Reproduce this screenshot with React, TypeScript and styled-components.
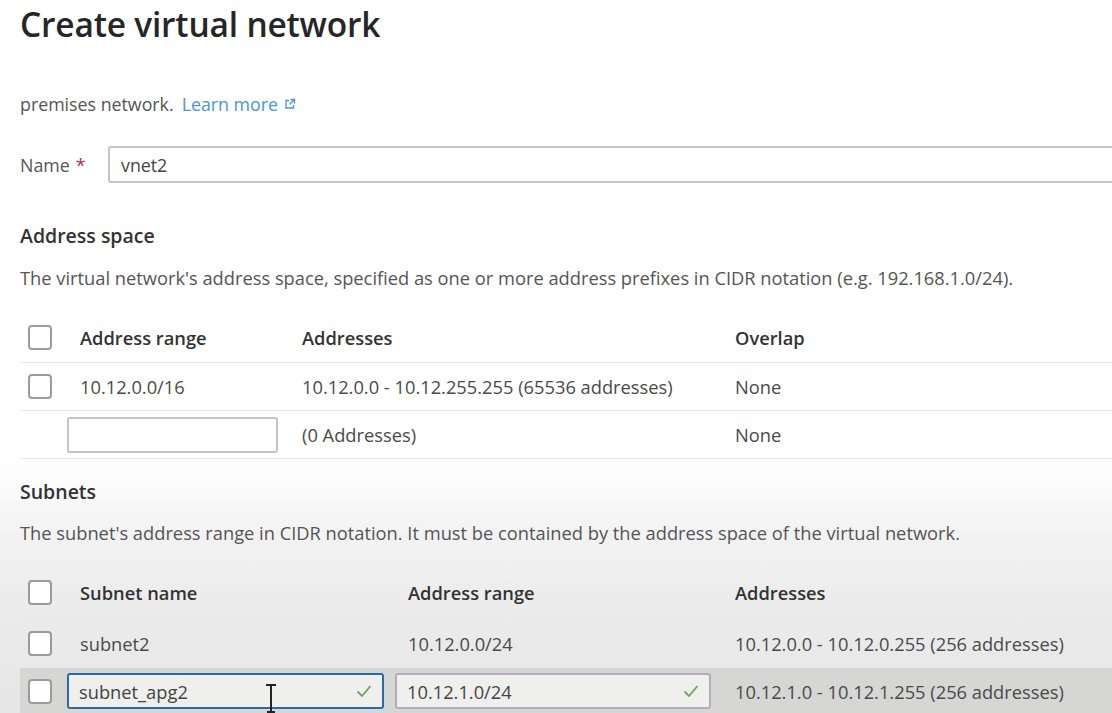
import React from "react";
import styled, { createGlobalStyle } from "styled-components";

const GlobalStyle = createGlobalStyle`
  html, body {
    margin: 0;
    padding: 0;
  }
  body {
    width: 1112px;
    height: 713px;
    overflow: hidden;
    font-family: "Open Sans", "Noto Sans", Arial, sans-serif;
    color: #464646;
    background: linear-gradient(to bottom, #ffffff 0px, #ffffff 460px, #f3f3f3 530px, #ececec 600px, #e6e6e6 713px);
  }
`;

const Page = styled.div`
  position: relative;
  height: 713px;
  padding-left: 20px;
  box-sizing: border-box;
  overflow: hidden;
`;

const Title = styled.h1`
  margin: 0;
  font-size: 33.5px;
  line-height: 48px;
  font-weight: 600;
  color: #262626;
  letter-spacing: -0.2px;
`;

const Intro = styled.p`
  margin: 44px 0 0;
  font-size: 17.8px;
  line-height: 24px;
  color: #555;
  display: flex;
  align-items: center;
  gap: 8px;
`;

const Link = styled.a`
  color: #4b96d2;
  text-decoration: none;
  display: inline-flex;
  align-items: center;
  gap: 6px;
`;

const NameRow = styled.div`
  margin-top: 30px;
  display: flex;
  align-items: center;
`;

const Label = styled.label`
  width: 88px;
  font-size: 17.8px;
  color: #555;
  display: flex;
  gap: 6px;
`;

const Required = styled.span`
  color: #b0334a;
`;

const NameInput = styled.div`
  flex: 1;
  height: 37px;
  margin-right: -20px;
  box-sizing: border-box;
  border: 2px solid #c9c1c9;
  border-right: none;
  border-radius: 3px 0 0 3px;
  display: flex;
  align-items: center;
  padding-left: 11px;
  font-size: 17.8px;
  color: #444;
`;

const SectionHeading = styled.h2<{ $top: number }>`
  margin: ${(p) => p.$top}px 0 0;
  font-size: 19.5px;
  line-height: 26px;
  font-weight: 600;
  color: #333;
`;

const Description = styled.p<{ $top: number }>`
  margin: ${(p) => p.$top}px 0 0;
  font-size: 18.3px;
  line-height: 24px;
  color: #555;
  white-space: nowrap;
`;

const Table = styled.div<{ $top: number }>`
  margin-top: ${(p) => p.$top}px;
  display: flex;
  flex-direction: column;
`;

const Row = styled.div<{ $cols: string; $h: number; $highlight?: boolean; $line?: boolean }>`
  display: grid;
  grid-template-columns: ${(p) => p.$cols};
  align-items: center;
  height: ${(p) => p.$h}px;
  box-sizing: border-box;
  border-bottom: ${(p) => (p.$line ? "1px solid #e8e8e8" : "none")};
  background: ${(p) => (p.$highlight ? "#d6d6d4" : "transparent")};
  font-size: 18.3px;
  color: #4a4a4a;
`;

const HeadCell = styled.div`
  font-weight: 600;
  color: #333;
  white-space: nowrap;
`;

const Cell = styled.div`
  white-space: nowrap;
`;

const CheckCell = styled.div`
  padding-left: 8px;
  display: flex;
  align-items: center;
`;

const Checkbox = styled.span`
  width: 24px;
  height: 25px;
  box-sizing: border-box;
  border: 2px solid #9b9b9b;
  border-radius: 4px;
  background: #fff;
  display: block;
`;

const CellInput = styled.div<{ $tone?: "focus" | "valid" | "plain" }>`
  margin-left: -13px;
  margin-right: 24px;
  height: 36px;
  box-sizing: border-box;
  border-radius: 3px;
  border: 2px solid
    ${(p) => (p.$tone === "focus" ? "#2f6aa8" : p.$tone === "valid" ? "#b6a9bd" : "#c4c4c4")};
  background: ${(p) => (p.$tone === "plain" ? "#fff" : "#efefee")};
  display: flex;
  align-items: center;
  justify-content: space-between;
  padding: 0 10px 0 10px;
  color: #444;
`;

const Cursor = styled.svg`
  position: absolute;
  left: 265px;
  top: 684px;
`;

const Check = () => (
  <svg width="16" height="14" viewBox="0 0 16 14">
    <path d="M1.5 7.5 L6 12 L14.5 2" fill="none" stroke="#6fa35c" strokeWidth="1.8" />
  </svg>
);

const ExternalIcon = () => (
  <svg width="12" height="12" viewBox="0 0 12 12">
    <path d="M5 2.5 H2 V10 H9.5 V7" fill="none" stroke="#4b96d2" strokeWidth="1.3" />
    <path d="M6.5 1.5 H10.5 V5.5 M10.5 1.5 L5.5 6.5" fill="none" stroke="#4b96d2" strokeWidth="1.3" />
  </svg>
);

const addrCols = "60px 222px 433px 1fr";
const subCols = "60px 328px 327px 1fr";

export default function App() {
  return (
    <>
      <GlobalStyle />
      <Page>
        <Title>Create virtual network</Title>
        <Intro>
          premises network.
          <Link>
            Learn more <ExternalIcon />
          </Link>
        </Intro>
        <NameRow>
          <Label>
            Name <Required>*</Required>
          </Label>
          <NameInput>vnet2</NameInput>
        </NameRow>

        <SectionHeading $top={40}>Address space</SectionHeading>
        <Description $top={17}>
          The virtual network's address space, specified as one or more address prefixes in CIDR notation (e.g. 192.168.1.0/24).
        </Description>
        <Table $top={22}>
          <Row $cols={addrCols} $h={51} $line>
            <CheckCell>
              <Checkbox />
            </CheckCell>
            <HeadCell>Address range</HeadCell>
            <HeadCell>Addresses</HeadCell>
            <HeadCell>Overlap</HeadCell>
          </Row>
          <Row $cols={addrCols} $h={48} $line>
            <CheckCell>
              <Checkbox />
            </CheckCell>
            <Cell>10.12.0.0/16</Cell>
            <Cell>10.12.0.0 - 10.12.255.255 (65536 addresses)</Cell>
            <Cell>None</Cell>
          </Row>
          <Row $cols={addrCols} $h={48} $line>
            <CheckCell />
            <CellInput $tone="plain" />
            <Cell>(0 Addresses)</Cell>
            <Cell>None</Cell>
          </Row>
        </Table>

        <SectionHeading $top={20}>Subnets</SectionHeading>
        <Description $top={16}>
          The subnet's address range in CIDR notation. It must be contained by the address space of the virtual network.
        </Description>
        <Table $top={23}>
          <Row $cols={subCols} $h={50} $line>
            <CheckCell>
              <Checkbox />
            </CheckCell>
            <HeadCell>Subnet name</HeadCell>
            <HeadCell>Address range</HeadCell>
            <HeadCell>Addresses</HeadCell>
          </Row>
          <Row $cols={subCols} $h={50}>
            <CheckCell>
              <Checkbox />
            </CheckCell>
            <Cell>subnet2</Cell>
            <Cell>10.12.0.0/24</Cell>
            <Cell>10.12.0.0 - 10.12.0.255 (256 addresses)</Cell>
          </Row>
          <Row $cols={subCols} $h={46} $highlight>
            <CheckCell>
              <Checkbox />
            </CheckCell>
            <CellInput $tone="focus">
              subnet_apg2
              <Check />
            </CellInput>
            <CellInput $tone="valid">
              10.12.1.0/24
              <Check />
            </CellInput>
            <Cell>10.12.1.0 - 10.12.1.255 (256 addresses)</Cell>
          </Row>
        </Table>
        <Cursor width="12" height="29" viewBox="0 0 12 29">
          <path d="M1 1 H11 M6 1 V28 M2 28 H10" fill="none" stroke="#222" strokeWidth="2" />
        </Cursor>
      </Page>
    </>
  );
}
